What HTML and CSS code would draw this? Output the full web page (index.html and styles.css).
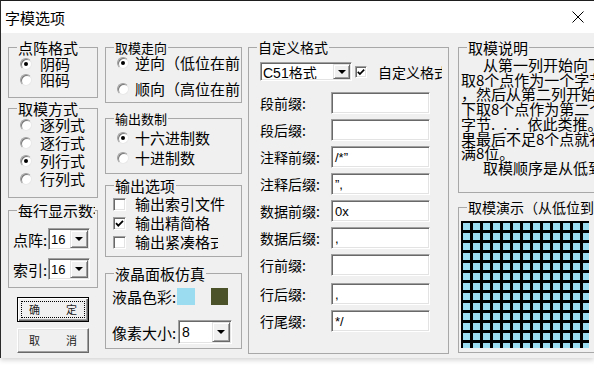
FILE: index.html
```html
<!DOCTYPE html>
<html lang="zh-CN">
<head>
<meta charset="utf-8">
<title>字模选项</title>
<link rel="stylesheet" href="styles.css">
</head>
<body>
<div class="window">
  <div class="titlebar">
    <span class="title">字模选项</span>
    <svg class="close" width="12" height="12" viewBox="0 0 12 12"><path d="M0.5 0.5 L11.5 11.5 M11.5 0.5 L0.5 11.5" stroke="#000" stroke-width="1" fill="none"/></svg>
  </div>
  <div class="client">
    <div class="col col1">
      <fieldset class="grp g-dot">
        <legend>点阵格式</legend>
        <div class="opt"><span class="radio on"></span>阴码</div>
        <div class="opt"><span class="radio"></span>阳码</div>
      </fieldset>
      <fieldset class="grp g-mode">
        <legend>取模方式</legend>
        <div class="opt"><span class="radio"></span>逐列式</div>
        <div class="opt"><span class="radio"></span>逐行式</div>
        <div class="opt"><span class="radio on"></span>列行式</div>
        <div class="opt"><span class="radio"></span>行列式</div>
      </fieldset>
      <fieldset class="grp g-line">
        <legend class="clip-legend">每行显示数据</legend>
        <div class="crow"><span class="clabel">点阵:</span><div class="combo c-small"><span class="val">16</span><span class="dd"></span></div></div>
        <div class="crow"><span class="clabel">索引:</span><div class="combo c-small"><span class="val">16</span><span class="dd"></span></div></div>
      </fieldset>
      <div class="btn btn-default"><span>确</span><span>定</span></div>
      <div class="btn btn-cancel"><span>取</span><span>消</span></div>
    </div>

    <div class="col col2">
      <fieldset class="grp g-dir">
        <legend class="legend-sm">取模走向</legend>
        <div class="opt"><span class="radio on"></span><span class="otext">逆向（低位在前）</span></div>
        <div class="opt"><span class="radio"></span><span class="otext">顺向（高位在前）</span></div>
      </fieldset>
      <fieldset class="grp g-base">
        <legend class="legend-sm">输出数制</legend>
        <div class="opt"><span class="radio on"></span>十六进制数</div>
        <div class="opt"><span class="radio"></span>十进制数</div>
      </fieldset>
      <fieldset class="grp g-out">
        <legend>输出选项</legend>
        <div class="opt"><span class="check"></span><span>输出索引文件</span></div>
        <div class="opt"><span class="check"><svg width="11" height="11" viewBox="0 0 11 11"><path d="M2 5.2 L4.3 7.6 L9 2.8" stroke="#000" stroke-width="1.8" fill="none"/></svg></span><span>输出精简格</span></div>
        <div class="opt"><span class="check"></span><span class="ctext">输出紧凑格式</span></div>
      </fieldset>
      <fieldset class="grp g-lcd">
        <legend>液晶面板仿真</legend>
        <div class="lrow"><span class="llabel">液晶色彩:</span><span class="swatch sw-blue"></span><span class="swatch sw-olive"></span></div>
        <div class="lrow lrow2"><span class="llabel">像素大小:</span><div class="combo c-px"><span class="val">8</span><span class="dd"></span></div></div>
      </fieldset>
    </div>

    <div class="col col3">
      <fieldset class="grp g-custom">
        <legend class="legend-14">自定义格式</legend>
        <div class="toprow">
          <div class="combo c-fmt"><span class="val">C51格式</span><span class="dd"></span></div>
          <span class="check small"><svg width="10" height="10" viewBox="0 0 10 10"><path d="M1.8 4.8 L3.9 7 L8.2 2.6" stroke="#000" stroke-width="1.7" fill="none"/></svg></span>
          <span class="custom-text">自定义格式</span>
        </div>
        <div class="frow"><span class="flabel">段前缀:</span><span class="field"></span></div>
        <div class="frow"><span class="flabel">段后缀:</span><span class="field"></span></div>
        <div class="frow"><span class="flabel">注释前缀:</span><span class="field">/*”</span></div>
        <div class="frow"><span class="flabel">注释后缀:</span><span class="field">”,</span></div>
        <div class="frow"><span class="flabel">数据前缀:</span><span class="field">0x</span></div>
        <div class="frow"><span class="flabel">数据后缀:</span><span class="field">,</span></div>
        <div class="frow"><span class="flabel">行前缀:</span><span class="field"></span></div>
        <div class="frow shift"><span class="flabel">行后缀:</span><span class="field">,</span></div>
        <div class="frow"><span class="flabel">行尾缀:</span><span class="field">*/</span></div>
      </fieldset>
    </div>

    <div class="col col4">
      <fieldset class="grp g-desc">
        <legend>取模说明</legend>
        <div class="desc">
          <div class="dl indent">从第一列开始向下</div>
          <div class="dl">取8个点作为一个字节</div>
          <div class="dl">，然后从第二列开始向</div>
          <div class="dl">下取8个点作为第二个</div>
          <div class="dl">字节<span class="dots">...</span>依此类推。如</div>
          <div class="dl">果最后不足8个点就补</div>
          <div class="dl">满8位。</div>
          <div class="dl indent">取模顺序是从低到高</div>
        </div>
      </fieldset>
      <fieldset class="grp g-demo">
        <legend class="legend-14">取模演示（从低位到高位）</legend>
        <div class="grid"></div>
      </fieldset>
    </div>
  </div>
</div>
</body>
</html>
```

FILE: styles.css
```css
* { box-sizing: border-box; }
html, body { margin: 0; padding: 0; background: #fff; }
body {
  width: 594px; height: 370px; overflow: hidden;
  font-family: "Noto Sans CJK SC", "Noto Sans", sans-serif;
  font-size: 15px; color: #000;
}
.window {
  width: 594px; height: 358px;
  border-top: 1px solid #1e1e1e; border-left: 1px solid #2a2a2a;
  background: #f0f0f0; overflow: hidden;
  box-shadow: 0 2px 5px rgba(0,0,0,0.18);
  display: flex; flex-direction: column;
}
.titlebar {
  flex: none; height: 32px; background: #fff;
  display: flex; align-items: center; justify-content: space-between;
  padding: 0 10px 0 4px;
}
.title { font-size: 15px; line-height: 15px; }
.close { display: block; }

.client { flex: 1; display: flex; padding: 7px 0 4px 7px; min-height: 0; }
.col { flex: none; display: flex; flex-direction: column; }
.col1 { width: 90px; }
.col2 { width: 137px; margin-left: 7px; }
.col3 { width: 201px; margin-left: 6px; }
.col4 { width: 170px; margin-left: 9px; }

.grp {
  margin: 0; padding: 0; min-width: 0;
  border: 1px solid #a8a8a8;
}
.grp > :not(legend) { margin-left: var(--pl, 0px); }
.grp legend {
  padding: 0 1px; margin-left: 8px;
  font-size: 15px; line-height: 15px; white-space: nowrap;
}
.grp legend.legend-sm { font-size: 13px; }
.grp legend.legend-14 { font-size: 14px; }
.grp legend.clip-legend { max-width: 78px; overflow: hidden; }

.opt {
  height: 16px; display: flex; align-items: center; gap: 8px;
  line-height: 16px; white-space: nowrap;
}
.radio {
  flex: none; position: relative; width: 12px; height: 12px;
  border-radius: 50%; background: #fff;
  border: 1px solid; border-color: #a0a0a0 #e8e8e8 #e8e8e8 #a0a0a0;
  box-shadow: inset 1px 1px 0 #787878;
}
.radio.on::after {
  content: ""; position: absolute; left: 3px; top: 3px;
  width: 4px; height: 4px; border-radius: 50%; background: #000;
}
.check {
  flex: none; width: 13px; height: 13px; background: #fff;
  border: 1px solid; border-color: #a0a0a0 #fff #fff #a0a0a0;
  box-shadow: inset 1px 1px 0 #696969, inset -1px -1px 0 #e3e3e3;
  display: flex; align-items: center; justify-content: center;
}
.check svg { display: block; }
.check.small { width: 12px; height: 12px; }

/* column 1 */
.g-dot { --pl: 11px; padding: 1px 0 9px 0; }
.g-mode { --pl: 11px; margin-top: 3px; padding: 0 0 9px 0; }
.g-mode .opt { height: 18px; }
.g-line { --pl: 4px; margin-top: 5px; padding: 10px 0 7px 0; display: flex; flex-direction: column; gap: 8px; }
.crow { height: 22px; display: flex; align-items: center; }
.clabel { width: 35px; flex: none; white-space: nowrap; }

.combo {
  display: flex; background: #fff; padding: 1px;
  border: 1px solid; border-color: #a0a0a0 #fff #fff #a0a0a0;
  box-shadow: inset 1px 1px 0 #696969, inset -1px -1px 0 #e3e3e3;
}
.combo .val {
  flex: 1; display: flex; align-items: center; padding-left: 1px;
  font-family: "Liberation Sans", "Noto Sans CJK SC", sans-serif; font-size: 13px;
  white-space: nowrap; overflow: hidden;
}
.combo .dd {
  flex: none; width: 18px; background: #f0f0f0;
  border: 1px solid; border-color: #e3e3e3 #696969 #696969 #e3e3e3;
  box-shadow: inset 1px 1px 0 #fff, inset -1px -1px 0 #a0a0a0;
  display: flex; align-items: center; justify-content: center;
}
.combo .dd::after {
  content: ""; width: 0; height: 0;
  border-left: 4px solid transparent; border-right: 4px solid transparent;
  border-top: 4px solid #000;
}
.c-small { width: 42px; height: 22px; }

.btn {
  width: 72px; height: 25px; margin-left: 9px;
  display: flex; align-items: center; justify-content: space-between;
  padding: 0 11px; font-size: 11px; line-height: 11px; color: #222;
  background: #f0f0f0;
}
.btn-default {
  margin-top: 9px; border: 1px solid #000;
  box-shadow: inset 1px 1px 0 #fff, inset -1px -1px 0 #696969, inset -2px -2px 0 #a0a0a0;
  outline: 1px dotted #000; outline-offset: -5px;
}
.btn-cancel {
  margin-top: 6px; border: 1px solid; border-color: #fff #696969 #696969 #fff;
  box-shadow: inset -1px -1px 0 #a0a0a0, inset 1px 1px 0 #e3e3e3;
}

/* column 2 */
.g-dir { --pl: 11px; padding: 0 0 5px 0; display: flex; flex-direction: column; gap: 10px; }
.otext { display: block; width: 105px; overflow: hidden; white-space: nowrap; }
.g-dir .opt, .g-base .opt { gap: 6px; }
.g-base { --pl: 11px; margin-top: 8px; padding: 4px 0 7px 0; display: flex; flex-direction: column; gap: 4px; }
.g-out { --pl: 7px; margin-top: 4px; padding: 3px 0 6px 0; display: flex; flex-direction: column; gap: 3px; }
.g-out .opt { gap: 9px; }
.ctext { display: block; max-width: 83px; overflow: hidden; white-space: nowrap; }
.g-lcd { --pl: 6px; margin-top: 9px; padding: 6px 0 4px 0; display: flex; flex-direction: column; gap: 14px; }
.lrow { height: 19px; display: flex; align-items: center; white-space: nowrap; }
.lrow2 { height: 24px; }
.llabel { flex: none; width: 65px; }
.lrow2 .llabel { width: 66px; }
.swatch { flex: none; height: 17px; }
.sw-blue { width: 18px; background: #9cdcf0; }
.sw-olive { width: 17px; margin-left: 16px; background: #4b5128; }
.c-px { width: 54px; height: 24px; }
.c-px .val { padding-left: 2px; font-size: 14px; }

/* column 3 */
.g-custom { --pl: 11px; flex: 1; padding: 7px 0 0 0; }
.toprow { height: 19px; display: flex; align-items: center; }
.c-fmt { width: 92px; height: 19px; }
.c-fmt .val { font-size: 14px; }
.c-fmt .dd { width: 17px; }
.toprow .check { margin-left: 3px; }
.custom-text { margin-left: 11px; width: 64px; overflow: hidden; white-space: nowrap; font-size: 14px; }
.frow { height: 22px; margin-top: 5px; display: flex; align-items: center; }
.toprow + .frow { margin-top: 11px; }
.frow.shift { margin-top: 7px; }
.flabel { flex: none; width: 71px; font-size: 14px; white-space: nowrap; }
.field {
  flex: none; width: 99px; height: 22px; background: #fff;
  border: 1px solid; border-color: #a0a0a0 #fff #fff #a0a0a0;
  box-shadow: inset 1px 1px 0 #696969, inset -1px -1px 0 #e3e3e3;
  padding: 0 0 0 3px; display: flex; align-items: center;
  font-family: "Liberation Sans", sans-serif; font-size: 13px;
}

/* column 4 */
.g-desc { --pl: 2px; padding: 3px 0 16px 0; }
.desc { font-size: 15px; line-height: 14.7px; white-space: nowrap; }
.dl.indent { padding-left: 22px; }
.dots { letter-spacing: 8px; }
.g-demo { --pl: 2px; margin-top: 7px; padding: 6px 0 4px 0; }
.grid {
  width: 128px; height: 127px;
  background-color: #9cdcf0;
  background-image:
    linear-gradient(to right, #000 3px, transparent 3px),
    linear-gradient(to bottom, #000 3px, transparent 3px);
  background-size: 10px 10px;
  background-position: -1px -1px;
}
```
